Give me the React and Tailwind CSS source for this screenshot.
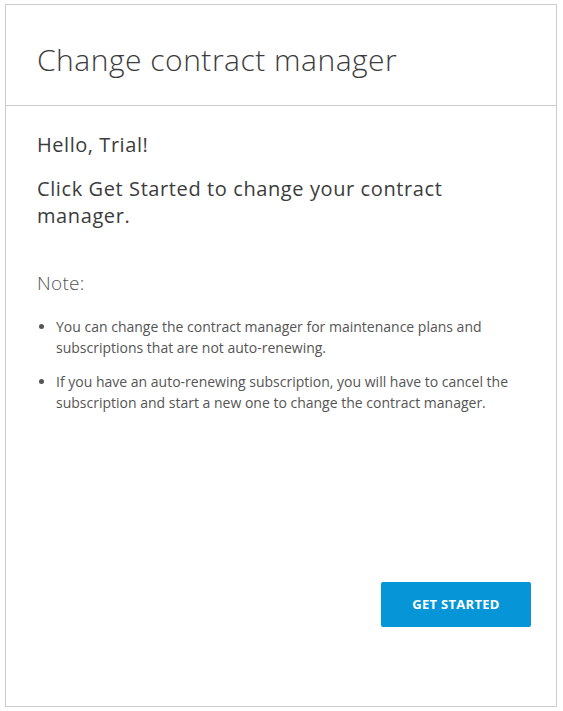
import React from 'react';

const App = () => {
  return (
    <div className="w-[563px] h-[711px] bg-white pt-[4px] pl-[5px] pr-[6px] pb-[4px]" style={{fontFamily: `"Open Sans", "Noto Sans", sans-serif`}}>
      <div className="h-full border border-[#cccccc] flex flex-col">
        <div className="h-[101px] px-[31px] pt-[37px] border-b border-[#cccccc] shrink-0">
          <h1 className="text-[30px] leading-[36px] font-light text-[#3c3c3c] tracking-[0.5px]">Change contract manager</h1>
        </div>
        <div className="flex-1 flex flex-col pl-[31px] pr-[25px] pt-[26px] pb-[79px]">
          <p className="text-[20px] leading-[26px] text-[#3c3c3c] tracking-[0.55px]">Hello, Trial!</p>
          <p className="mt-[17px] text-[20px] leading-[27px] text-[#3c3c3c] tracking-[0.6px] pr-[60px]">
            Click Get Started to change your contract manager.
          </p>
          <p className="mt-[41px] text-[19px] leading-[26px] font-light text-[#555555] tracking-[0.3px]">Note:</p>
          <ul className="mt-[20px] text-[14px] leading-[21px] text-[#555555] list-disc pl-[19px] pr-[10px] flex flex-col gap-[13px]">
            <li>You can change the contract manager for maintenance plans and subscriptions that are not auto-renewing.</li>
            <li>If you have an auto-renewing subscription, you will have to cancel the subscription and start a new one to change the contract manager.</li>
          </ul>
          <div className="mt-auto flex justify-end">
            <button className="w-[150px] h-[45px] bg-[#0696d7] text-white text-[13px] font-bold rounded-[2px] tracking-[0.3px]">GET STARTED</button>
          </div>
        </div>
      </div>
    </div>
  );
};

export default App;
